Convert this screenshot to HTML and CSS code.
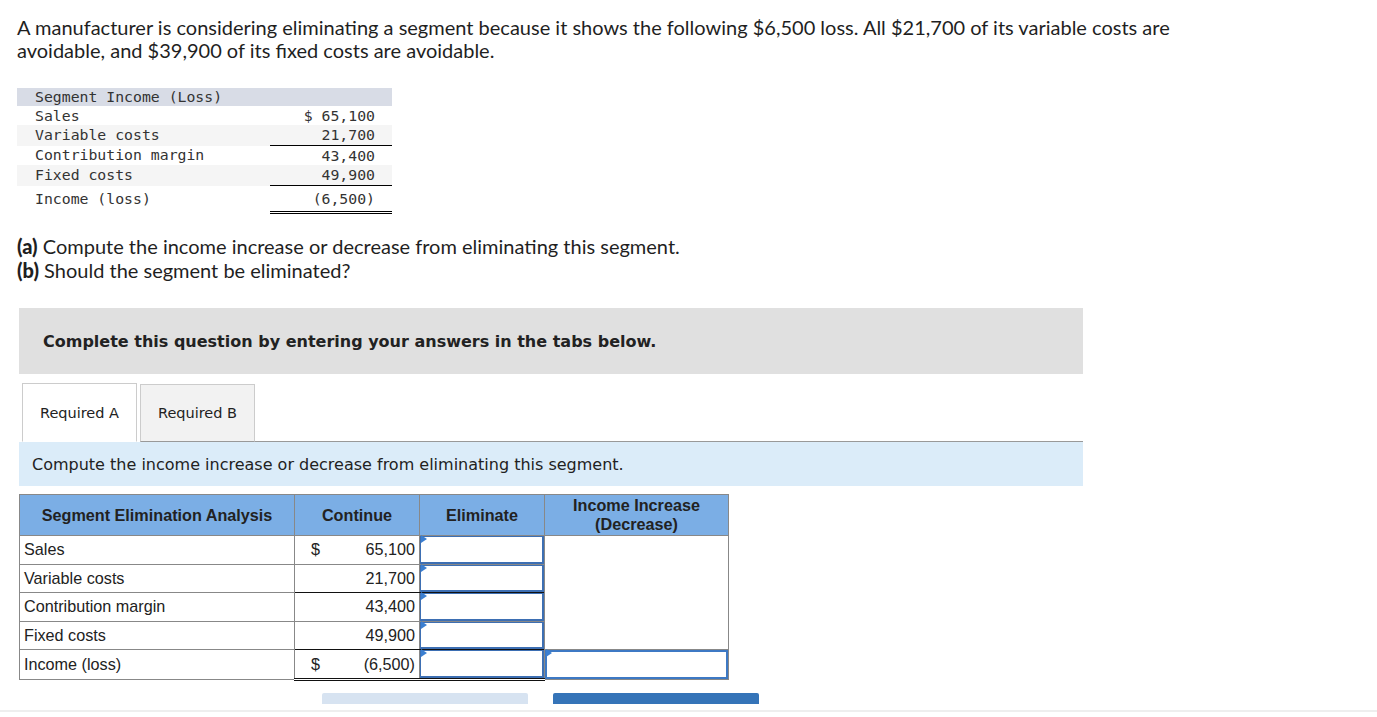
FILE: index.html
```html
<!DOCTYPE html>
<html>
<head>
<meta charset="utf-8">
<link rel="stylesheet" href="styles.css">
</head>
<body>
<div class="page">
  <p class="intro">A manufacturer is considering eliminating a segment because it shows the following $6,500 loss. All $21,700 of its variable costs are avoidable, and $39,900 of its fixed costs are avoidable.</p>

  <table class="mono">
    <tr class="mhead"><td class="ml">Segment Income (Loss)</td><td class="mv"></td></tr>
    <tr class="r19"><td class="ml">Sales</td><td class="mv">$ 65,100</td></tr>
    <tr class="alt"><td class="ml">Variable costs</td><td class="mv uline">21,700</td></tr>
    <tr class="r19"><td class="ml">Contribution margin</td><td class="mv">43,400</td></tr>
    <tr class="alt"><td class="ml">Fixed costs</td><td class="mv uline">49,900</td></tr>
    <tr class="mtotal"><td class="ml">Income (loss)</td><td class="mv dline">(6,500)</td></tr>
  </table>

  <p class="question"><b>(a)</b> Compute the income increase or decrease from eliminating this segment.<br><b>(b)</b> Should the segment be eliminated?</p>

  <div class="notice">Complete this question by entering your answers in the tabs below.</div>

  <div class="tabs">
    <div class="tab active">Required A</div>
    <div class="tab">Required B</div>
    <div class="tabline"></div>
  </div>
  <div class="instr">Compute the income increase or decrease from eliminating this segment.</div>

  <table class="analysis">
    <tr class="ahead">
      <th class="c1">Segment Elimination Analysis</th>
      <th class="c2">Continue</th>
      <th class="c3">Eliminate</th>
      <th class="c4">Income Increase<br>(Decrease)</th>
    </tr>
    <tr>
      <td class="lbl">Sales</td>
      <td class="num"><span class="cur">$</span>65,100</td>
      <td class="inp"><div class="box"></div><span class="tri"></span></td>
      <td class="blank" rowspan="4"></td>
    </tr>
    <tr>
      <td class="lbl">Variable costs</td>
      <td class="num ub">21,700</td>
      <td class="inp ub"><div class="box"></div><span class="tri"></span></td>
    </tr>
    <tr>
      <td class="lbl">Contribution margin</td>
      <td class="num">43,400</td>
      <td class="inp"><div class="box"></div><span class="tri"></span></td>
    </tr>
    <tr>
      <td class="lbl">Fixed costs</td>
      <td class="num ub">49,900</td>
      <td class="inp ub"><div class="box"></div><span class="tri"></span></td>
    </tr>
    <tr>
      <td class="lbl">Income (loss)</td>
      <td class="num db"><span class="cur">$</span>(6,500)</td>
      <td class="inp db"><div class="box"></div><span class="tri"></span></td>
      <td class="inp4"><div class="box"></div><span class="tri"></span></td>
    </tr>
  </table>

  <div class="buttons">
    <span class="btn light"></span>
    <span class="btn dark"></span>
  </div>
</div>
<div class="footline"></div>
</body>
</html>
```

FILE: styles.css
```css
html, body {
  margin: 0;
  padding: 0;
  background: #fff;
  overflow: hidden;
}

.page {
  padding: 16px 0 0 17px;
  height: 694px;
  color: #222;
}

.intro {
  margin: 0;
  width: 1175px;
  font-family: "Lato", sans-serif;
  font-size: 20px;
  line-height: 23px;
  color: #1f1f1f;
}

.mono {
  margin-top: 26px;
  border-collapse: collapse;
  font-family: "DejaVu Sans Mono", monospace;
  font-size: 14.8px;
  color: #333;
}
.mono td {
  padding: 0;
  height: 20px;
  line-height: 18px;
}
.mono .r19 td {
  height: 19px;
}
.mono .ml {
  width: 235px;
  padding-left: 18px;
}
.mono .mv {
  width: 105px;
  padding-right: 17px;
  text-align: right;
}
.mono .mhead td {
  background: #d8dce6;
  height: 18px;
}
.mono .alt td {
  background: #f5f5f5;
}
.mono .uline {
  border-bottom: 1px solid #000;
}
.mono .mtotal td {
  height: 21px;
  vertical-align: top;
  padding-top: 4px;
}
.mono .dline {
  border-bottom: 3px double #000;
}

.question {
  margin: 20px 0 0 0;
  font-family: "Lato", sans-serif;
  font-size: 20px;
  line-height: 24px;
  color: #1f1f1f;
}
.question b {
  font-weight: 900;
}

.notice {
  margin: 26px 0 0 2px;
  height: 66px;
  padding-left: 24px;
  box-sizing: border-box;
  width: 1064px;
  background: #e0e0e0;
  display: flex;
  align-items: center;
  font-family: "DejaVu Sans", sans-serif;
  font-weight: bold;
  font-size: 16px;
  color: #222;
}

.tabs {
  margin: 9px 0 0 2px;
  width: 1064px;
  display: flex;
  align-items: flex-end;
  height: 59px;
}
.tab {
  width: 115px;
  height: 58px;
  box-sizing: border-box;
  display: flex;
  align-items: center;
  justify-content: center;
  border: 1px solid #ccc;
  border-bottom: 1px solid #999;
  background: #f2f2f2;
  font-family: "DejaVu Sans", sans-serif;
  font-size: 14.5px;
  color: #222;
}
.tab.active {
  background: #fff;
  border-bottom-color: #fff;
  margin-left: 3px;
  margin-right: 3px;
  height: 59px;
}
.tabline {
  flex: 1;
  border-bottom: 1px solid #999;
}

.instr {
  margin-left: 2px;
  width: 1064px;
  height: 44px;
  box-sizing: border-box;
  padding-left: 13px;
  background: #dbecf9;
  display: flex;
  align-items: center;
  font-family: "DejaVu Sans", sans-serif;
  font-size: 16px;
  color: #222;
}

.analysis {
  margin: 8px 0 0 2px;
  border-collapse: collapse;
  font-family: "Liberation Sans", Arial, sans-serif;
  font-size: 16.2px;
  color: #222;
}
.analysis th, .analysis td {
  border: 1px solid #888;
  padding: 0;
}
.analysis .ahead th {
  background: #7baee5;
  height: 40px;
  font-weight: bold;
  text-align: center;
  line-height: 19px;
  color: #222;
}
.analysis .c1 { width: 274px; }
.analysis .c2 { width: 124px; }
.analysis .c3 { width: 124px; }
.analysis .c4 { width: 183px; }
.analysis td {
  height: 27.6px;
}
.analysis .lbl {
  padding-left: 4px;
}
.analysis .num {
  text-align: right;
  padding-right: 4px;
}
.analysis .cur {
  float: left;
  padding-left: 16px;
}
.analysis .ub {
  border-bottom: 1px solid #111;
}
.analysis .db {
  border-bottom: 3px double #111;
}
.analysis .inp, .analysis .inp4 {
  position: relative;
}
.analysis .box {
  position: absolute;
  left: 0;
  top: 0;
  right: 0;
  bottom: 0;
  border: 1px solid #3d6fb3;
  border-width: 1px 2px 2px 1px;
}
.analysis .inp4 .box {
  border-width: 2px;
  border-color: #3d79c4;
}
.analysis .tri {
  position: absolute;
  left: 1px;
  top: -1px;
  width: 0;
  height: 0;
  border-top: 4px solid transparent;
  border-bottom: 4px solid transparent;
  border-left: 6px solid #3b7fd1;
}
.analysis .blank {
  background: #fff;
}

.buttons {
  margin-top: 12px;
  display: flex;
  gap: 25px;
  padding-left: 305px;
}
.btn {
  display: block;
  width: 206px;
  height: 11px;
  border-radius: 2px 2px 0 0;
}
.btn.light { background: #d7e3f1; }
.btn.dark { background: #3574b8; }

.footline {
  height: 2px;
  background: #eee;
}
```
